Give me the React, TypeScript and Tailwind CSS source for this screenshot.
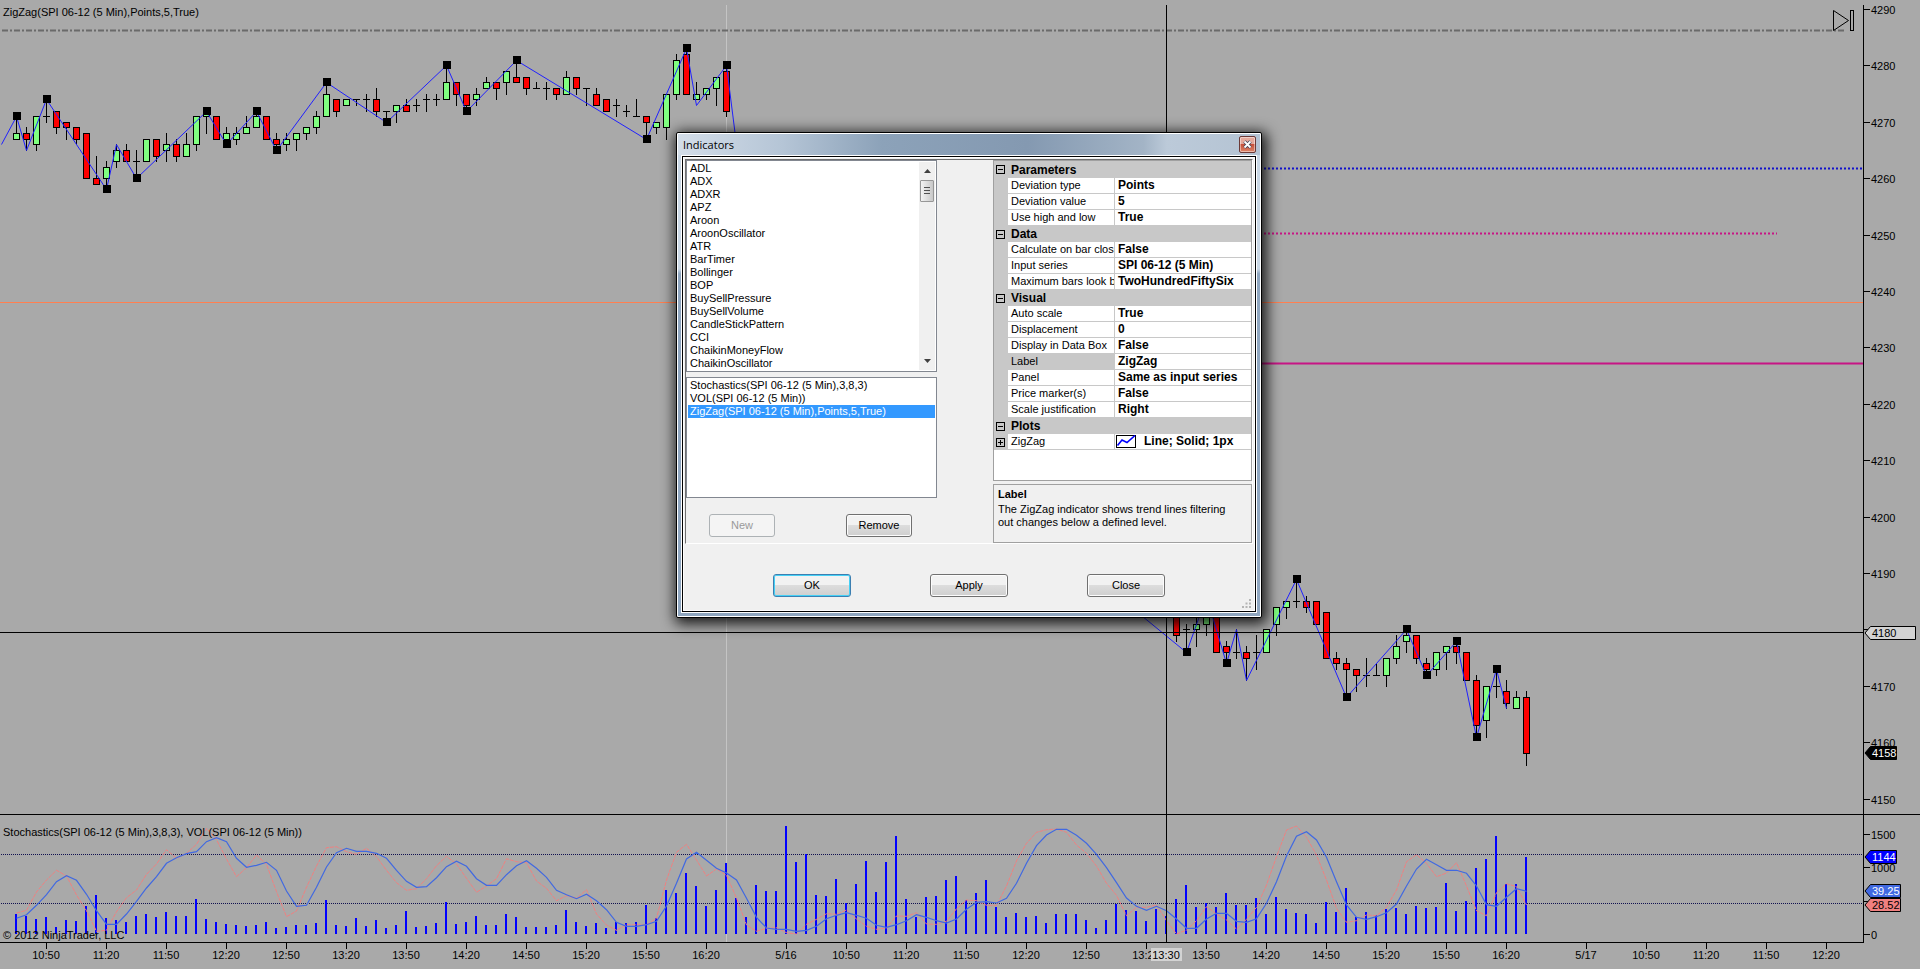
import React from "react";

type Kind = "G" | "R" | "D";
/* bar index, high, body top, body bottom, low; all in points below 4290 */
type Bar = [number, number, number, number, number, Kind];

const BARS: Bar[] = [
  [0, 19, 22, 23, 23, "G"], [1, 21, 22, 23, 25, "R"], [2, 19, 19, 24, 25, "G"], [3, 16, 19, 19, 20, "D"],
  [4, 18, 18, 21, 22, "R"], [5, 20, 20, 21, 23, "R"], [6, 21, 21, 23, 24, "R"], [7, 22, 22, 30, 30, "R"],
  [8, 26, 30, 31, 31, "R"], [9, 27, 28, 30, 32, "G"], [10, 24, 25, 27, 28, "G"], [11, 24, 25, 27, 27, "R"],
  [12, 25, 27, 27, 30, "D"], [13, 23, 23, 27, 27, "G"], [14, 23, 23, 26, 27, "R"], [15, 22, 24, 25, 27, "G"],
  [16, 23, 24, 26, 27, "R"], [17, 22, 24, 26, 26, "G"], [18, 19, 19, 24, 25, "G"], [19, 18, 18, 19, 22, "G"],
  [20, 19, 19, 23, 23, "R"], [21, 21, 22, 23, 24, "G"], [22, 21, 22, 23, 24, "G"], [23, 19, 21, 22, 22, "G"],
  [24, 18, 19, 21, 21, "G"], [25, 19, 19, 23, 23, "R"], [26, 22, 23, 24, 25, "R"], [27, 22, 23, 24, 25, "G"],
  [28, 22, 22, 23, 25, "G"], [29, 21, 21, 22, 23, "G"], [30, 18, 19, 21, 22, "G"], [31, 13, 15, 19, 19, "G"],
  [32, 16, 16, 18, 19, "R"], [33, 16, 16, 17, 17, "G"], [34, 16, 16, 16, 17, "D"], [35, 15, 16, 16, 18, "D"],
  [36, 14, 16, 18, 19, "R"], [37, 18, 18, 18, 20, "D"], [38, 17, 17, 18, 20, "G"], [39, 16, 17, 18, 18, "R"],
  [40, 16, 17, 17, 18, "D"], [41, 15, 16, 16, 18, "D"], [42, 15, 16, 16, 17, "D"], [43, 10, 13, 16, 16, "G"],
  [44, 13, 13, 15, 17, "R"], [45, 15, 15, 17, 18, "R"], [46, 14, 15, 16, 17, "G"], [47, 12, 13, 14, 14, "G"],
  [48, 13, 13, 14, 16, "R"], [49, 11, 11, 13, 15, "G"], [50, 9, 12, 13, 13, "R"], [51, 12, 12, 14, 15, "R"],
  [52, 13, 14, 14, 14, "D"], [53, 13, 14, 14, 16, "D"], [54, 14, 14, 15, 16, "R"], [55, 11, 12, 15, 15, "G"],
  [56, 12, 12, 14, 15, "R"], [57, 14, 14, 14, 17, "D"], [58, 14, 15, 17, 17, "R"], [59, 16, 16, 18, 18, "R"],
  [60, 16, 17, 17, 19, "D"], [61, 17, 18, 18, 19, "D"], [62, 16, 19, 19, 19, "D"], [63, 19, 19, 20, 23, "R"],
  [64, 20, 20, 21, 22, "G"], [65, 15, 15, 21, 23, "G"], [66, 8, 9, 15, 16, "G"], [67, 7, 8, 15, 15, "R"],
  [68, 13, 15, 16, 16, "G"], [69, 14, 14, 15, 16, "G"], [70, 12, 12, 14, 17, "G"], [71, 10, 11, 18, 19, "R"],
  [116, 104, 106, 111, 112, "R"], [117, 109, 110, 110, 114, "D"], [118, 108, 109, 110, 113, "G"],
  [119, 106, 106, 109, 111, "G"], [120, 106, 106, 114, 114, "R"], [121, 112, 113, 114, 116, "R"],
  [122, 110, 114, 114, 115, "D"], [123, 113, 114, 115, 119, "R"], [124, 111, 114, 114, 117, "D"],
  [125, 110, 110, 114, 114, "G"], [126, 106, 106, 109, 111, "G"], [127, 105, 105, 106, 108, "G"],
  [128, 101, 105, 105, 106, "D"], [129, 104, 105, 106, 107, "R"], [130, 105, 105, 109, 109, "R"],
  [131, 107, 107, 115, 115, "R"], [132, 114, 115, 116, 117, "R"], [133, 115, 116, 117, 122, "R"],
  [134, 117, 117, 118, 121, "R"], [135, 115, 118, 118, 120, "D"], [136, 116, 118, 118, 118, "D"],
  [137, 115, 115, 118, 120, "G"], [138, 111, 113, 115, 116, "G"], [139, 110, 111, 112, 114, "G"],
  [140, 111, 111, 115, 116, "R"], [141, 115, 116, 117, 118, "R"], [142, 114, 114, 117, 118, "G"],
  [143, 113, 113, 114, 117, "G"], [144, 112, 113, 114, 116, "R"], [145, 114, 114, 119, 119, "R"],
  [146, 118, 119, 127, 129, "R"], [147, 120, 120, 126, 129, "G"], [148, 117, 120, 120, 122, "D"],
  [149, 119, 121, 123, 124, "R"], [150, 121, 122, 124, 124, "G"], [151, 121, 122, 132, 134, "R"],
];

const ZIGZAG_A: [number, number][] = [
  [-1.5, 24], [0, 19], [1, 25], [3, 16], [9, 32], [10, 24], [12, 30], [19, 18], [21, 24], [24, 18], [26, 25],
  [31, 13], [37, 20], [43, 10], [45, 18], [50, 9], [63, 23], [67, 7], [68, 17], [71, 10], [72, 24],
];
const ZIGZAG_B: [number, number][] = [
  [112, 106.7], [117, 114], [119, 104], [121, 116], [122, 110], [123, 119], [128, 101], [133, 122], [139, 110],
  [141, 118], [144, 112], [146, 129], [148, 117], [149, 124],
];
const PIVOTS: [number, number][] = [
  [0, 19], [3, 16], [9, 32], [12, 30], [19, 18], [21, 24], [24, 18], [26, 25], [31, 13], [37, 20], [43, 10],
  [45, 18], [50, 9], [63, 23], [67, 7], [71, 10], [117, 114], [121, 116], [128, 101], [133, 122], [139, 110],
  [141, 118], [144, 112], [146, 129], [148, 117],
];

const VOLUME = [
  20, 18, 15, 17, 7, 14, 13, 28, 39, 16, 14, 12, 18, 20, 17, 22, 18, 18, 35, 15, 12, 10, 9, 8, 9, 12, 6, 7, 9, 9,
  11, 34, 9, 8, 16, 8, 14, 6, 9, 23, 7, 8, 11, 32, 10, 12, 18, 9, 9, 20, 17, 7, 7, 7, 9, 24, 12, 8, 11, 6, 12, 11,
  12, 29, 16, 44, 41, 61, 48, 28, 44, 71, 36, 17, 49, 43, 43, 108, 72, 80, 39, 38, 55, 31, 50, 73, 42, 72, 98, 35,
  17, 37, 38, 54, 58, 34, 41, 54, 27, 17, 21, 17, 18, 11, 20, 20, 20, 14, 6, 14, 30, 24, 23, 13, 25, 18, 35, 49,
  27, 31, 27, 41, 29, 29, 36, 20, 37, 25, 21, 20, 11, 32, 22, 46, 17, 22, 19, 25, 26, 20, 28, 26, 27, 51, 23, 33,
  66, 75, 98, 50, 50, 77,
];

/* stochastic samples, three units per pixel */
const SLOW = [
  355, 344, 316, 284, 245, 227, 241, 283, 332, 373, 373, 342, 304, 264, 230, 190, 173, 161, 155, 125, 113, 125,
  175, 202, 196, 187, 211, 273, 319, 316, 262, 201, 158, 145, 154, 154, 160, 175, 211, 244, 262, 260, 233, 200,
  184, 199, 236, 256, 256, 224, 197, 182, 205, 232, 271, 284, 296, 283, 302, 329, 367, 379, 379, 374, 364, 318,
  250, 177, 157, 181, 205, 219, 240, 295, 352, 384, 388, 388, 394, 391, 379, 356, 346, 338, 346, 355, 376, 382,
  374, 362, 344, 352, 362, 369, 357, 328, 307, 305, 309, 295, 250, 190, 137, 105, 88, 88, 106, 130, 163, 203, 248,
  294, 319, 331, 319, 332, 357, 385, 385, 357, 340, 340, 364, 367, 356, 310, 245, 168, 109, 95, 120, 172, 245,
  315, 352, 358, 350, 338, 312, 258, 207, 178, 194, 211, 211, 220, 258, 314, 319, 292, 266, 274,
];
const FAST = [
  339, 331, 276, 240, 211, 228, 285, 332, 394, 391, 335, 293, 270, 223, 192, 149, 175, 160, 133, 85, 119, 177,
  230, 203, 165, 193, 275, 350, 333, 262, 198, 143, 140, 155, 163, 145, 170, 211, 248, 271, 266, 236, 197, 169,
  192, 235, 277, 258, 236, 176, 185, 188, 243, 265, 302, 287, 295, 269, 342, 375, 391, 374, 374, 374, 355, 240,
  157, 133, 180, 228, 207, 226, 294, 375, 394, 385, 383, 398, 402, 373, 358, 341, 343, 330, 357, 379, 388, 384,
  348, 349, 338, 372, 373, 364, 326, 300, 302, 316, 316, 258, 183, 130, 97, 89, 87, 97, 135, 160, 198, 250, 286,
  347, 322, 322, 315, 362, 402, 390, 362, 320, 342, 360, 387, 358, 322, 255, 170, 90, 78, 112, 165, 240, 325, 367,
  362, 345, 347, 322, 270, 185, 164, 190, 230, 219, 188, 258, 332, 347, 278, 251, 260, 315,
];

const TIMES: [number, string][] = [
  [46, "10:50"], [106, "11:20"], [166, "11:50"], [226, "12:20"], [286, "12:50"], [346, "13:20"], [406, "13:50"],
  [466, "14:20"], [526, "14:50"], [586, "15:20"], [646, "15:50"], [706, "16:20"], [786, "5/16"], [846, "10:50"],
  [906, "11:20"], [966, "11:50"], [1026, "12:20"], [1086, "12:50"], [1146, "13:20"], [1206, "13:50"],
  [1266, "14:20"], [1326, "14:50"], [1386, "15:20"], [1446, "15:50"], [1506, "16:20"], [1586, "5/17"],
  [1646, "10:50"], [1706, "11:20"], [1766, "11:50"], [1826, "12:20"],
];

const barX = (i: number) => 16 + i * 10;
const priceY = (k: number) => Math.round(9 + k * 5.64);
const points = (list: [number, number][]) => list.map(([i, k]) => `${barX(i) + 0.5},${priceY(k) + 0.5}`).join(" ");
const stoch = (list: number[]) => list.map((v, i) => `${barX(i) + 0.5},${(v / 3 - 15).toFixed(1)}`).join(" ");

function PricePlot() {
  return (
    <svg className="absolute inset-0 size-full" aria-label="Price chart">
      <line x1="726.5" x2="726.5" y1="5" y2="100%" stroke="#c4c4c4" />
      <line x1="2" x2="1844" y1="30.5" y2="30.5" stroke="#6a6a6a" strokeWidth="2" strokeDasharray="6 2 2 2" />
      <line x1="900" x2="100%" y1="168.5" y2="168.5" stroke="#1212cc" strokeWidth="2" strokeDasharray="2 2" />
      <line x1="900" x2="1777" y1="233.5" y2="233.5" stroke="#c71585" strokeWidth="2" strokeDasharray="2 2" />
      <line x1="0" x2="100%" y1="302.5" y2="302.5" stroke="#ff7f50" />
      <line x1="900" x2="100%" y1="363.5" y2="363.5" stroke="#c71585" strokeWidth="2" />
      <g shapeRendering="crispEdges">
        {BARS.map(([i, h, t, b, l, kind]) => {
          const x = barX(i);
          return (
            <g key={i}>
              <rect x={x} y={priceY(h)} width="1" height={priceY(l) - priceY(h) + 1} fill="#000" />
              {kind === "D" ? (
                <rect x={x - 3} y={priceY(t)} width="7" height="1" fill="#000" />
              ) : (
                <rect
                  x={x - 2.5}
                  y={priceY(t) + 0.5}
                  width="6"
                  height={priceY(b) - priceY(t)}
                  fill={kind === "G" ? "#80ff80" : "#ff0000"}
                  stroke="#000"
                />
              )}
            </g>
          );
        })}
      </g>
      <polyline points={points(ZIGZAG_A)} fill="none" stroke="#2020ff" />
      <polyline points={points(ZIGZAG_B)} fill="none" stroke="#2020ff" />
      {PIVOTS.map(([i, k]) => (
        <rect key={i} x={barX(i) - 3} y={priceY(k) - 4} width="8" height="8" fill="#000" />
      ))}
      <line x1="0" x2="100%" y1="632.5" y2="632.5" stroke="#000" />
      <line x1="1166.5" x2="1166.5" y1="5" y2="100%" stroke="#000" />
    </svg>
  );
}

function StochPlot() {
  return (
    <svg className="absolute inset-0 size-full" aria-label="Stochastics and volume">
      <line x1="726.5" x2="726.5" y1="0" y2="100%" stroke="#c4c4c4" />
      <line x1="1" x2="100%" y1="39.5" y2="39.5" stroke="#101050" strokeDasharray="1 1" />
      <line x1="1" x2="100%" y1="88.5" y2="88.5" stroke="#101050" strokeDasharray="1 1" />
      {VOLUME.map((v, i) => (
        <rect key={i} x={barX(i) - 1} y={119 - v} width="2" height={v} fill="#0000ff" />
      ))}
      <polyline points={stoch(FAST)} fill="none" stroke="#f08080" strokeDasharray="4 1" />
      <polyline points={stoch(SLOW)} fill="none" stroke="#4169e1" strokeWidth="1.2" />
      <line x1="1166.5" x2="1166.5" y1="0" y2="100%" stroke="#000" />
    </svg>
  );
}

function Tag({ y, w, fill, color, text }: { y: number; w: number; fill: string; color: string; text: string }) {
  return (
    <g>
      <path d={`M1 ${y + 7} L6.5 ${y + 0.5} H${w + 0.5} V${y + 13.5} H6.5 Z`} fill={fill} stroke="#000" />
      <text x="8" y={y + 11} fill={color}>{text}</text>
    </g>
  );
}

function Tick({ y, text }: { y: number; text?: string }) {
  return (
    <g>
      <rect x="0" y={y} width="6" height="1" />
      {text && <text x="7" y={y + 5}>{text}</text>}
    </g>
  );
}

const PRICES = [4290, 4280, 4270, 4260, 4250, 4240, 4230, 4220, 4210, 4200, 4190, 4180, 4170, 4160, 4150];

const INDICATORS = [
  "ADL", "ADX", "ADXR", "APZ", "Aroon", "AroonOscillator", "ATR", "BarTimer", "Bollinger", "BOP",
  "BuySellPressure", "BuySellVolume", "CandleStickPattern", "CCI", "ChaikinMoneyFlow", "ChaikinOscillator",
];
const ACTIVE = [
  "Stochastics(SPI 06-12 (5 Min),3,8,3)",
  "VOL(SPI 06-12 (5 Min))",
  "ZigZag(SPI 06-12 (5 Min),Points,5,True)",
];

const GROUPS: { name: string; rows: [string, string][] }[] = [
  { name: "Parameters", rows: [["Deviation type", "Points"], ["Deviation value", "5"], ["Use high and low", "True"]] },
  {
    name: "Data",
    rows: [
      ["Calculate on bar close", "False"],
      ["Input series", "SPI 06-12 (5 Min)"],
      ["Maximum bars look back", "TwoHundredFiftySix"],
    ],
  },
  {
    name: "Visual",
    rows: [
      ["Auto scale", "True"], ["Displacement", "0"], ["Display in Data Box", "False"], ["Label", "ZigZag"],
      ["Panel", "Same as input series"], ["Price marker(s)", "False"], ["Scale justification", "Right"],
    ],
  },
  { name: "Plots", rows: [["ZigZag", "Line; Solid; 1px"]] },
];

function Expander({ open, name }: { open: boolean; name: string }) {
  return (
    <button type="button" aria-label={`${open ? "Collapse" : "Expand"} ${name}`} className="ml-[2px] block size-[9px]">
      <svg width="9" height="9" shapeRendering="crispEdges" fill="none" stroke="#000">
        <rect x="0.5" y="0.5" width="8" height="8" />
        <path d={open ? "M2 4.5H7" : "M2 4.5H7M4.5 2V7"} />
      </svg>
    </button>
  );
}

function PropertyGrid() {
  return (
    <div className="h-[321px] border border-[#a0a0a0] bg-white">
      <table className="w-full table-fixed border-separate border-spacing-0 text-left">
        <colgroup>
          <col className="w-[14px]" />
          <col className="w-[107px]" />
          <col />
        </colgroup>
        <tbody>
          {GROUPS.map((g, gi) => (
            <React.Fragment key={g.name}>
              <tr className={gi === 0 ? "h-[17px] bg-[#c8c8c8]" : "h-4 bg-[#c8c8c8]"}>
                <td className="p-0">
                  <Expander open name={g.name} />
                </td>
                <th colSpan={2} className="p-0 pl-[3px] text-[12px] leading-4 font-bold">
                  {g.name}
                </th>
              </tr>
              {g.rows.map(([label, value]) => (
                <tr key={label} className="h-4">
                  <td className="bg-[#c8c8c8] p-0">{g.name === "Plots" && <Expander open={false} name={label} />}</td>
                  <th
                    className={
                      "overflow-hidden border-r border-b border-[#c8c8c8] p-0 pl-[3px] text-[11px] leading-[15px] font-normal whitespace-nowrap " +
                      (label === "Label" ? "bg-[#c8c8c8]" : "")
                    }
                  >
                    {label}
                  </th>
                  <td className="border-b border-[#c8c8c8] p-0 pl-[3px] text-[12px] leading-[15px] font-bold whitespace-nowrap">
                    {g.name === "Plots" ? (
                      <span className="flex items-center gap-2">
                        <svg width="20" height="13" viewBox="0 0 20 13" className="-ml-0.5">
                          <rect x="0.5" y="0.5" width="19" height="12" fill="#fff" stroke="#000" />
                          <path d="M1.5 10.5L6 5L11 7.5L19 0.5" fill="none" stroke="#0000ff" strokeWidth="1.6" />
                        </svg>
                        {value}
                      </span>
                    ) : (
                      value
                    )}
                  </td>
                </tr>
              ))}
            </React.Fragment>
          ))}
        </tbody>
      </table>
    </div>
  );
}

const BTN =
  "h-[23px] rounded-[3px] border border-[#707070] bg-linear-to-b from-[#f2f2f2] from-50% via-[#dddddd] via-50% to-[#cfcfcf] text-[11px] shadow-[inset_0_0_0_1px_#fcfcfc]";

function IndicatorsDialog() {
  return (
    <div
      role="dialog"
      aria-labelledby="dialog-title"
      className="absolute top-[132px] left-[676px] w-[586px] rounded-[2px] border border-black bg-white p-px shadow-[2px_3px_14px_3px_rgba(0,0,0,0.85)]"
    >
      <div className="bg-linear-to-b from-[#c9d7e5] from-28% to-[#8fa6c0] to-29% px-[3px] pb-[3px]">
        <header className="-mx-[3px] flex h-[21px] items-center justify-between bg-[linear-gradient(to_right,#d3dde8_0%,#b5c5d6_18%,#8ca2b9_35%,#8499b1_60%,#a3b4c6_80%,#bccad9_84%,#b4c3d3_100%)] pr-[4px] pl-[5px]">
          <h1 id="dialog-title" className="font-['Open_Sans',sans-serif] text-[11px] leading-[20px] text-black">
            Indicators
          </h1>
          <button
            type="button"
            aria-label="Close window"
            className="flex size-[17px] items-center justify-center rounded-[2px] border border-[#6b3a38] bg-linear-to-b from-[#e5a99c] from-45% via-[#c6503a] via-50% to-[#dc8468] shadow-[inset_0_0_0_1px_rgba(255,255,255,0.45)]"
          >
            <svg width="9" height="9" viewBox="0 0 9 9">
              <path d="M1.5 1.5L7.5 7.5M7.5 1.5L1.5 7.5" stroke="#40465a" strokeWidth="3.4" />
              <path d="M1.5 1.5L7.5 7.5M7.5 1.5L1.5 7.5" stroke="#fff" strokeWidth="1.8" />
            </svg>
          </button>
        </header>
        <div className="border border-white">
          <div className="border border-black bg-[#f0f0f0]">
            <div className="relative border border-white p-px">
              <div className="flex justify-between border border-t-[#707070] border-r-white border-b-white border-l-[#707070]">
                <div className="flex w-[251px] flex-col pb-[6px]">
                  <div className="flex h-[212px] border border-[#828790] bg-white p-px">
                    <ul role="listbox" aria-label="Available indicators" className="flex-1 text-[11px] leading-[13px]">
                      {INDICATORS.map((n) => (
                        <li key={n} role="option" aria-selected="false" className="pl-[2px]">
                          {n}
                        </li>
                      ))}
                    </ul>
                    <div className="flex w-[16px] flex-col items-center bg-[#f0f0f0] py-[7px]" aria-hidden="true">
                      <svg width="7" height="4">
                        <path d="M0 4L3.5 0L7 4Z" fill="#404040" />
                      </svg>
                      <div className="mt-[7px] flex h-[22px] w-[14px] items-center justify-center rounded-[1px] border border-[#979797] bg-linear-to-r from-[#f3f3f3] to-[#c8c8c8]">
                        <svg width="6" height="8" shapeRendering="crispEdges">
                          <path d="M0 0.5H6M0 3.5H6M0 6.5H6" stroke="#505050" />
                        </svg>
                      </div>
                      <svg width="7" height="4" className="mt-auto">
                        <path d="M0 0L3.5 4L7 0Z" fill="#404040" />
                      </svg>
                    </div>
                  </div>
                  <ul
                    role="listbox"
                    aria-label="Applied indicators"
                    className="mt-[5px] h-[121px] border border-[#828790] bg-white p-px text-[11px] leading-[13px]"
                  >
                    {ACTIVE.map((n, i) => (
                      <li
                        key={n}
                        role="option"
                        aria-selected={i === 2}
                        className={i === 2 ? "bg-[#3399ff] pl-[2px] text-white" : "pl-[2px]"}
                      >
                        {n}
                      </li>
                    ))}
                  </ul>
                  <div className="mt-4 flex gap-[71px] pl-[23px]">
                    <button
                      type="button"
                      disabled
                      className="h-[23px] w-[66px] rounded-[3px] border border-[#adb2b5] bg-[#f4f4f4] text-[11px] text-[#9a9a9a]"
                    >
                      New
                    </button>
                    <button type="button" className={BTN + " w-[66px]"}>
                      Remove
                    </button>
                  </div>
                </div>
                <div className="flex w-[259px] flex-col gap-[3px]">
                  <PropertyGrid />
                  <section className="flex-1 border border-[#a0a0a0] px-1 pt-[3px] text-[11px] leading-[13px]">
                    <h2 className="mb-[2px] font-bold">Label</h2>
                    <p>
                      The ZigZag indicator shows trend lines filtering
                      <br />
                      out changes below a defined level.
                    </p>
                  </section>
                </div>
              </div>
              <div className="flex justify-center gap-[79px] pt-[30px] pb-[12px]">
                <button
                  type="button"
                  className="h-[23px] w-[78px] rounded-[3px] border border-[#3c7fb1] bg-linear-to-b from-[#f2f2f2] from-50% via-[#dddddd] via-50% to-[#cfcfcf] text-[11px] shadow-[inset_0_0_0_1px_#46d0f5]"
                >
                  OK
                </button>
                <button type="button" className={BTN + " w-[78px]"}>
                  Apply
                </button>
                <button type="button" className={BTN + " w-[78px]"}>
                  Close
                </button>
              </div>
              <svg width="9" height="9" className="absolute right-[3px] bottom-[2px]" fill="#b4b4b4" aria-hidden="true">
                <path d="M7 0h2v2h-2zM7 3.5h2v2h-2zM7 7h2v2h-2zM3.5 3.5h2v2h-2zM3.5 7h2v2h-2zM0 7h2v2h-2z" />
              </svg>
            </div>
          </div>
        </div>
      </div>
    </div>
  );
}

export default function App() {
  return (
    <main className="relative flex h-screen min-h-[700px] flex-col overflow-hidden bg-[#a9a9a9] font-['Liberation_Sans',Arial,sans-serif] text-[11px] text-black">
      <section className="flex flex-1 border-b border-black">
        <div className="relative flex-1">
          <PricePlot />
          <h2 className="absolute top-[5px] left-[3px] text-[11px] leading-[15px]">
            ZigZag(SPI 06-12 (5 Min),Points,5,True)
          </h2>
          <button type="button" aria-label="Go to last bar" className="absolute top-[10px] right-[9px] h-[21px] w-[21px]">
            <svg width="21" height="21" fill="none" stroke="#000">
              <path d="M0.5 0.5L15.5 10.5L0.5 20.5Z" />
              <rect x="17.5" y="0.5" width="3" height="20" />
            </svg>
          </button>
        </div>
        <div className="relative w-[57px]">
          <svg className="absolute inset-0 size-full">
            <line x1="0.5" x2="0.5" y1="5" y2="100%" stroke="#000" />
            <g transform="translate(1 0)">
              {PRICES.map((p) => (
                <Tick key={p} y={priceY(4290 - p)} text={String(p)} />
              ))}
              <Tag y={626} w={51} fill="#d3d3d3" color="#000" text="4180" />
              <Tag y={746} w={32} fill="#000" color="#fff" text="4158" />
            </g>
          </svg>
        </div>
      </section>
      <section className="flex h-[128px]">
        <div className="relative flex-1 border-b border-black">
          <StochPlot />
          <h2 className="absolute top-[10px] left-[3px] text-[11px] leading-[15px]">
            Stochastics(SPI 06-12 (5 Min),3,8,3), VOL(SPI 06-12 (5 Min))
          </h2>
          <p className="absolute bottom-[-1px] left-[3px] text-[11px] leading-[15px]">© 2012 NinjaTrader, LLC</p>
        </div>
        <div className="relative w-[57px]">
          <svg className="absolute inset-0 size-full">
            <line x1="0.5" x2="0.5" y1="0" y2="100%" stroke="#000" />
            <g transform="translate(1 0)">
              <Tick y={19} text="1500" />
              <Tick y={52} text="1000" />
              <Tick y={86} />
              <Tick y={119} text="0" />
              <Tag y={35} w={32} fill="#0000ff" color="#fff" text="1144" />
              <Tag y={69} w={36} fill="#4169e1" color="#fff" text="39.25" />
              <Tag y={83} w={36} fill="#f08080" color="#000" text="28.52" />
            </g>
          </svg>
        </div>
      </section>
      <footer className="relative h-[26px]">
        <svg className="absolute inset-0 size-full">
          {TIMES.map(([x, t]) => (
            <g key={x}>
              <rect x={x} y="0" width="1" height="6" />
              <text x={x} y="16" textAnchor="middle">{t}</text>
            </g>
          ))}
          <rect x="1151" y="5" width="31" height="13" fill="#d3d3d3" />
          <text x="1166" y="16" textAnchor="middle">13:30</text>
        </svg>
      </footer>
      <IndicatorsDialog />
    </main>
  );
}
